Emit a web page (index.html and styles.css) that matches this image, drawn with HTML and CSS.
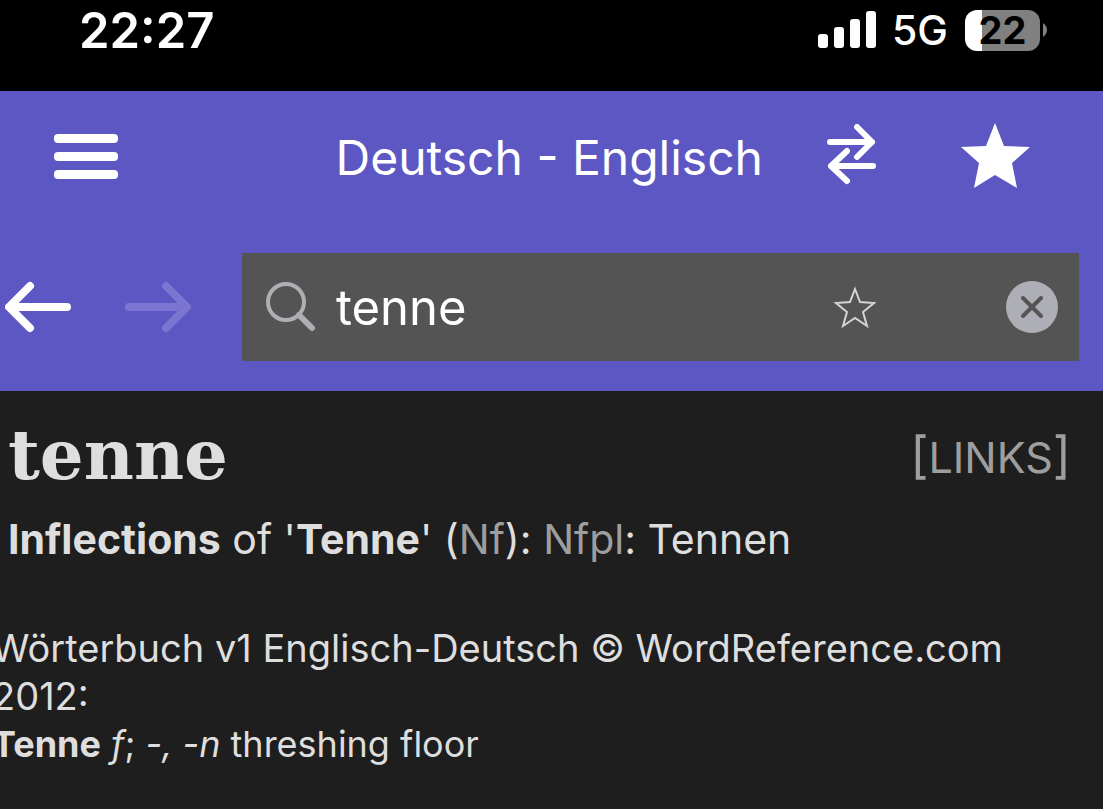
FILE: index.html
```html
<!DOCTYPE html>
<html lang="de">
<head>
<meta charset="utf-8">
<meta name="viewport" content="width=device-width, initial-scale=1">
<title>tenne - Deutsch-Englisch</title>
<link rel="stylesheet" href="styles.css">
</head>
<body>

<div class="statusbar">
  <div class="time">22:27</div>
  <div class="status">
    <svg class="signal" width="58" height="38" viewBox="0 0 58 38" fill="#fff">
      <rect x="0" y="23" width="10" height="14" rx="3"/>
      <rect x="16" y="16" width="10" height="21" rx="3"/>
      <rect x="32" y="8" width="10" height="29" rx="3"/>
      <rect x="48" y="0" width="10" height="37" rx="3"/>
    </svg>
    <span class="network">5G</span>
    <div class="battery"><span>22</span></div>
    <svg class="batterytip" width="4" height="14" viewBox="0 0 4 14"><path d="M0 0Q4 3 4 7T0 14Z" fill="#808080"/></svg>
  </div>
</div>

<header>
  <div class="titlebar">
    <button class="menu" aria-label="Menu">
      <svg width="66" height="48" viewBox="0 0 66 48" fill="#fff">
        <rect x="1" y="1" width="64" height="9" rx="4"/>
        <rect x="1" y="19" width="64" height="9" rx="4"/>
        <rect x="1" y="37" width="64" height="9" rx="4"/>
      </svg>
    </button>
    <div class="title">Deutsch - Englisch</div>
    <button class="swap" aria-label="Swap languages">
      <svg width="50" height="66" viewBox="0 0 50 66" fill="none" stroke="#fff" stroke-width="6" stroke-linecap="round" stroke-linejoin="round">
        <path d="M3 18H45M30 3L45 18L30 33M46 42H4M20 27L4 42L20 57"/>
      </svg>
    </button>
    <button class="favorites" aria-label="Favorites">
      <svg width="70" height="70" viewBox="0 0 70 70" fill="#fff">
        <path d="M34 1L43 24L69 25L51 41L56 66L34 53L13 66L18 41L0 25L25 24Z"/>
      </svg>
    </button>
  </div>

  <div class="searchbar">
    <button class="back" aria-label="Back">
      <svg width="66" height="52" viewBox="0 0 66 52" fill="none" stroke="#fff" stroke-width="8" stroke-linecap="round" stroke-linejoin="round">
        <path d="M62 26H5M25 5L4 26L25 47"/>
      </svg>
    </button>
    <button class="forward" aria-label="Forward" disabled>
      <svg width="66" height="52" viewBox="0 0 66 52" fill="none" stroke="#7b75d1" stroke-width="8" stroke-linecap="round" stroke-linejoin="round">
        <path d="M4 26H61M41 5L62 26L41 47"/>
      </svg>
    </button>
    <form class="search">
      <svg width="50" height="50" viewBox="0 0 50 50" fill="none" stroke="#aeaeb4" stroke-linecap="round">
        <circle cx="20" cy="20" r="18" stroke-width="4"/>
        <path d="M33 33L46 46" stroke-width="6"/>
      </svg>
      <input type="text" aria-label="Search" value="tenne">
      <button type="button" class="save" aria-label="Save word">
        <svg width="44" height="44" viewBox="0 0 44 44" fill="none" stroke="#d4d4d4" stroke-width="2">
          <path d="M22 4L27 17L41 18L30 27L34 41L22 33L10 41L14 27L3 18L17 17Z"/>
        </svg>
      </button>
      <button type="reset" class="clear" aria-label="Clear">
        <svg width="52" height="52" viewBox="0 0 52 52">
          <circle cx="26" cy="26" r="26" fill="#aeaeb6"/>
          <path d="M17 17L35 35M35 17L17 35" stroke="#545454" stroke-width="4" stroke-linecap="round"/>
        </svg>
      </button>
    </form>
  </div>
</header>

<main>
  <div class="heading">
    <h1>tenne</h1>
    <a class="links" href="#">[<span>LINKS</span>]</a>
  </div>
  <p class="inflections"><b>Inflections</b> of '<b>Tenne</b>' (<span class="pos">Nf</span>): <span class="pos">Nfpl</span>: Tennen</p>
  <div class="entry">
    <p class="source">Wörterbuch v1 Englisch-Deutsch © WordReference.com 2012:</p>
    <p class="translation"><b>Tenne</b> <i>f</i>; <i>-, -n</i> threshing floor</p>
  </div>
</main>

</body>
</html>
```
FILE: styles.css
```css
* {
  box-sizing: border-box;
}

body {
  margin: 0;
  background: #1e1e1e;
  color: #dedede;
  font-family: Inter, "Liberation Sans", sans-serif;
  overflow-x: hidden;
}

button {
  display: flex;
  flex: none;
  padding: 0;
  border: 0;
  background: none;
}

svg {
  display: block;
  flex: none;
}

.statusbar {
  display: flex;
  justify-content: space-between;
  height: 91px;
  padding: 0 56px 0 79px;
  background: #000;
  color: #fff;
}

.time {
  font-size: 49px;
  line-height: 61px;
  font-weight: 600;
}

.status {
  display: flex;
  align-items: center;
  height: 60px;
}

.network {
  margin: 0 17px 0 16px;
  font-size: 41px;
  font-weight: 500;
}

.battery {
  width: 75px;
  height: 41px;
  border-radius: 12px;
  background: linear-gradient(to right, #fff 17px, #808080 17px);
  color: #000;
  font-size: 38px;
  line-height: 41px;
  font-weight: 700;
  text-align: center;
}

.batterytip {
  margin: 0 0 0 3px;
}

header {
  background: #5d57c4;
}

.titlebar {
  display: flex;
  align-items: center;
  height: 132px;
  padding: 0 72px 0 53px;
}

.title {
  flex: 1;
  padding-right: 64px;
  color: #fff;
  font-size: 48px;
  text-align: right;
  white-space: nowrap;
}

.swap {
  margin-right: 84px;
}

.searchbar {
  display: flex;
  align-items: center;
  padding: 30px 24px 30px 5px;
}

.forward {
  margin: 0 51px 0 54px;
}

.search {
  display: flex;
  flex: 1;
  align-items: center;
  min-width: 0;
  height: 108px;
  padding: 0 21px 0 24px;
  background: #545454;
}

.search input {
  flex: 1;
  width: 0;
  min-width: 0;
  margin-left: 20px;
  padding: 0;
  border: 0;
  outline: 0;
  background: none;
  color: #fff;
  font-family: inherit;
  font-size: 49px;
}

.save {
  margin-right: 129px;
}

main {
  padding: 24px 32px 0 8px;
}

.heading {
  display: flex;
  justify-content: space-between;
  align-items: center;
}

h1 {
  margin: 0;
  font-family: "DejaVu Serif", serif;
  font-size: 69px;
  line-height: 80px;
  font-weight: 700;
}

.links {
  color: #9e9e9e;
  font-size: 50px;
  text-decoration: none;
}

.links span {
  font-size: 43px;
}

p {
  margin: 0;
}

.inflections {
  margin-top: 20px;
  font-size: 41px;
  line-height: 48px;
}

.pos {
  color: #9e9e9e;
}

.entry {
  margin: 61px 0 0 -16px;
  line-height: 48px;
}

.source {
  font-size: 38px;
}

.translation {
  font-size: 36px;
}
```
